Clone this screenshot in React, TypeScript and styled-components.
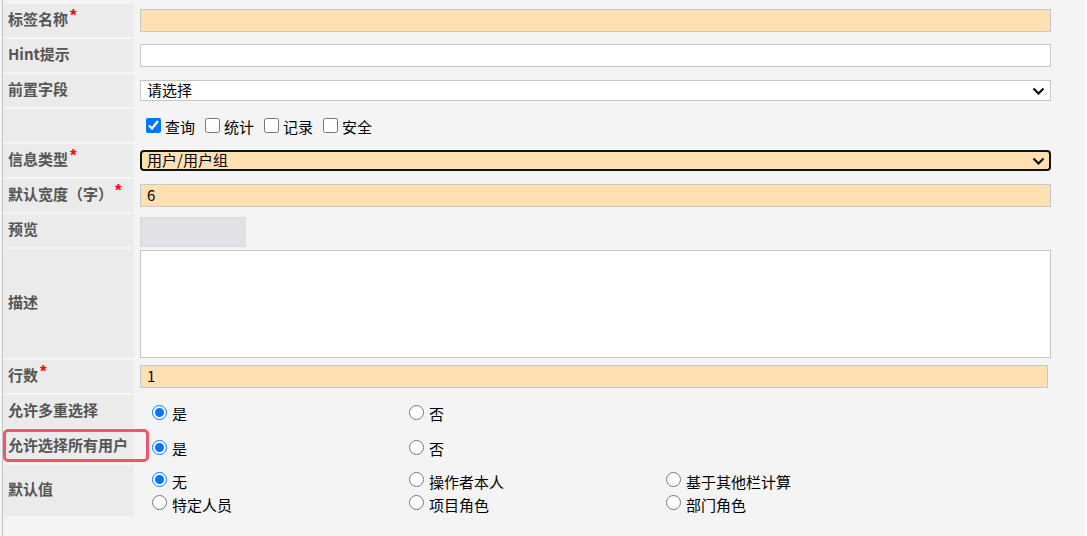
import React from "react";
import styled, { createGlobalStyle } from "styled-components";

const GlobalStyle = createGlobalStyle`
  html, body { margin: 0; padding: 0; background: #ffffff; }
  * { box-sizing: border-box; }
`;

const FONT = `"Noto Sans CJK SC", "Noto Sans", sans-serif`;

const Page = styled.div`
  width: 1085px;
  min-height: 536px;
  background: #f4f4f4;
  padding-left: 2px;
  font-family: ${FONT};
`;

const Frame = styled.div`
  min-height: 536px;
  border-left: 1px solid #c4c4c4;
  padding-top: 4px;
  display: grid;
  grid-template-columns: 131px 1fr;
  column-gap: 2px;
  row-gap: 2px;
  align-content: start;
`;

const Label = styled.div<{ $h?: number }>`
  position: relative;
  background: #ebebeb;
  min-height: ${(p) => p.$h ?? 33}px;
  display: flex;
  align-items: center;
  padding-left: 5px;
  padding-bottom: 3px;
  font-size: 15px;
  line-height: 18px;
  font-weight: 700;
  color: #555555;
  white-space: nowrap;
`;

const Star = styled.span`
  color: #ff0000;
  font-family: "Liberation Sans", sans-serif;
  font-size: 17px;
  font-weight: 700;
  position: relative;
  top: -3px;
  margin-left: 2px;
`;

const Cell = styled.div<{ $align?: string; $pt?: number }>`
  display: flex;
  align-items: ${(p) => p.$align ?? "center"};
  padding-left: 4px;
  padding-top: ${(p) => p.$pt ?? 0}px;
`;

const TextInput = styled.div<{ $w: number; $peach?: boolean }>`
  width: ${(p) => p.$w}px;
  height: 23px;
  border: 1px solid #c8c8c8;
  background: ${(p) => (p.$peach ? "#ffe0b3" : "#ffffff")};
  padding-left: 6px;
  padding-bottom: 2px;
  display: flex;
  align-items: center;
  font-size: 15px;
  color: #000;
`;

const SelectBox = styled.div<{ $focused?: boolean; $peach?: boolean }>`
  position: relative;
  width: 911px;
  height: 21px;
  border: ${(p) => (p.$focused ? "2px solid #111" : "1px solid #c8c8c8")};
  border-radius: ${(p) => (p.$focused ? "4px" : "0")};
  background: ${(p) => (p.$peach ? "#ffe0b3" : "#ffffff")};
  padding-left: ${(p) => (p.$focused ? 5 : 6)}px;
  padding-bottom: 2px;
  display: flex;
  align-items: center;
  font-size: 15px;
  color: #000;
`;

const Chevron = styled.svg<{ $focused?: boolean }>`
  position: absolute;
  right: ${(p) => (p.$focused ? 4 : 5)}px;
  top: 50%;
  margin-top: -4px;
`;

const Preview = styled.div`
  width: 106px;
  height: 30px;
  background: #e1e1e5;
  border: 1px solid #dcdcdf;
`;

const TextArea = styled.div`
  width: 911px;
  height: 108px;
  background: #ffffff;
  border: 1px solid #c4c4c4;
  margin-top: 1px;
`;

const CheckGroup = styled.div`
  display: flex;
  align-items: center;
  padding-top: 2px;
`;

const CheckItem = styled.label`
  display: inline-flex;
  align-items: center;
  font-size: 15px;
  color: #000;
  margin-right: 4px;
`;

const Box = styled.input`
  width: 15px;
  height: 15px;
  margin: 0 4px 3px 6px;
`;

const RadioGrid = styled.div`
  display: grid;
  grid-template-columns: repeat(3, 257px);
  grid-auto-rows: 23px;
  align-content: center;
`;

const RadioItem = styled.label`
  display: inline-flex;
  align-items: center;
  padding-top: 4px;
  font-size: 15px;
  color: #000;
  white-space: nowrap;
`;

const Radio = styled.input`
  width: 15px;
  height: 15px;
  margin: 0 5px 3px 12px;
`;

const Highlight = styled.div`
  position: absolute;
  left: 0;
  top: -1px;
  width: 146px;
  height: 33px;
  border: 3px solid #f0566b;
  border-radius: 5px;
  pointer-events: none;
`;

const ChevronIcon = ({ focused }: { focused?: boolean }) => (
  <Chevron $focused={focused} width="13" height="8" viewBox="0 0 13 8">
    <path d="M1.5 1.5 L6.5 6.5 L11.5 1.5" fill="none" stroke="#111" strokeWidth="2.2" />
  </Chevron>
);

const R = ({ name, label, checked }: { name: string; label: string; checked?: boolean }) => (
  <RadioItem>
    <Radio type="radio" name={name} defaultChecked={checked} />
    {label}
  </RadioItem>
);

export default function App() {
  return (
    <>
      <GlobalStyle />
      <Page>
        <Frame>
          <Label>
            标签名称<Star>*</Star>
          </Label>
          <Cell>
            <TextInput $w={911} $peach />
          </Cell>

          <Label>Hint提示</Label>
          <Cell>
            <TextInput $w={911} />
          </Cell>

          <Label>前置字段</Label>
          <Cell>
            <SelectBox>
              请选择
              <ChevronIcon />
            </SelectBox>
          </Cell>

          <Label />
          <Cell>
            <CheckGroup>
              <CheckItem>
                <Box type="checkbox" defaultChecked />
                查询
              </CheckItem>
              <CheckItem>
                <Box type="checkbox" />
                统计
              </CheckItem>
              <CheckItem>
                <Box type="checkbox" />
                记录
              </CheckItem>
              <CheckItem>
                <Box type="checkbox" />
                安全
              </CheckItem>
            </CheckGroup>
          </Cell>

          <Label>
            信息类型<Star>*</Star>
          </Label>
          <Cell>
            <SelectBox $focused $peach>
              用户/用户组
              <ChevronIcon focused />
            </SelectBox>
          </Cell>

          <Label>
            默认宽度（字）<Star>*</Star>
          </Label>
          <Cell>
            <TextInput $w={911} $peach>
              6
            </TextInput>
          </Cell>

          <Label>预览</Label>
          <Cell $align="flex-start" $pt={3}>
            <Preview />
          </Cell>

          <Label $h={109}>描述</Label>
          <Cell $align="flex-start">
            <TextArea />
          </Cell>

          <Label>
            行数<Star>*</Star>
          </Label>
          <Cell>
            <TextInput $w={908} $peach>
              1
            </TextInput>
          </Cell>

          <Label>允许多重选择</Label>
          <Cell>
            <RadioGrid>
              <R name="multi" label="是" checked />
              <R name="multi" label="否" />
            </RadioGrid>
          </Cell>

          <Label>
            允许选择所有用户
            <Highlight />
          </Label>
          <Cell>
            <RadioGrid>
              <R name="all" label="是" checked />
              <R name="all" label="否" />
            </RadioGrid>
          </Cell>

          <Label $h={51}>默认值</Label>
          <Cell>
            <RadioGrid>
              <R name="def" label="无" checked />
              <R name="def" label="操作者本人" />
              <R name="def" label="基于其他栏计算" />
              <R name="def" label="特定人员" />
              <R name="def" label="项目角色" />
              <R name="def" label="部门角色" />
            </RadioGrid>
          </Cell>
        </Frame>
      </Page>
    </>
  );
}
